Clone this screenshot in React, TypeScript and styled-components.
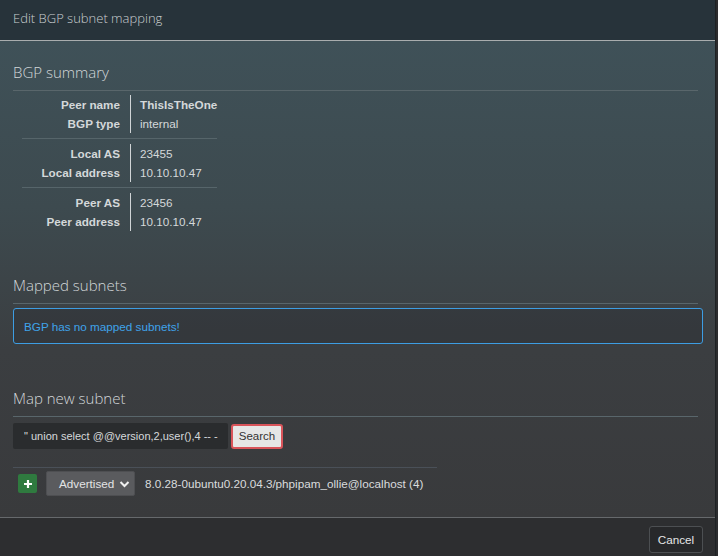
import React from 'react';
import styled, { createGlobalStyle } from 'styled-components';

const Global = createGlobalStyle`
  html, body { margin: 0; padding: 0; background: #2b2c2e; }
  body { font-family: "Liberation Sans", Arial, sans-serif; }
`;

const Modal = styled.div`
  width: 716px;
  height: 556px;
  display: flex;
  flex-direction: column;
  border-right: 1px solid #1e2224;
  box-sizing: border-box;
  overflow: hidden;
`;

const Header = styled.div`
  height: 41px;
  flex: none;
  box-sizing: border-box;
  background: #27333a;
  border-bottom: 1px solid #a9adae;
  display: flex;
  align-items: center;
  padding: 0 13px 5px 13px;
  color: #c9cfd1;
  font-family: "Open Sans", sans-serif;
  font-weight: 300;
  font-size: 13px;
`;

const Body = styled.div`
  flex: 1;
  background: linear-gradient(180deg, #3f5158 0%, #3d4a4f 35%, #3b3e41 65%, #393a3c 100%);
  padding: 21px 13px 0 13px;
  display: flex;
  flex-direction: column;
  align-items: flex-start;
`;

const SectionTitle = styled.h4<{ $top?: number }>`
  margin: ${p => p.$top ?? 0}px 0 0 0;
  font-family: "Open Sans", sans-serif;
  font-weight: 300;
  font-size: 15px;
  color: #d2d7d9;
  padding-bottom: 8px;
  border-bottom: 1px solid #59666b;
  width: 685px;
`;

const SummaryTable = styled.table`
  border-collapse: collapse;
  margin: 4px 0 0 9px;
  font-size: 11.7px;
  color: #d4d8da;
`;

const Label = styled.th`
  text-align: right;
  font-weight: bold;
  padding: 0 10px 0 0;
  width: 98px;
  height: 19px;
  line-height: 19px;
  border-right: 1px solid #d0d4d6;
  white-space: nowrap;
`;

const Value = styled.td<{ $bold?: boolean }>`
  padding: 0 0 0 9px;
  width: 66px;
  height: 19px;
  line-height: 19px;
  font-weight: ${p => (p.$bold ? 'bold' : 'normal')};
  white-space: nowrap;
`;

const DividerCell = styled.td`
  height: 5px;
  padding: 0;
  border-bottom: 1px solid #56656a;
`;

const GapCell = styled.td`
  height: 5px;
  padding: 0;
`;

const Alert = styled.div`
  margin-top: 4px;
  width: 690px;
  height: 36px;
  box-sizing: border-box;
  border: 1px solid #3d9de3;
  border-radius: 3px;
  background: rgba(40, 44, 48, 0.35);
  color: #3fa3ea;
  font-size: 11.7px;
  display: flex;
  align-items: center;
  padding-left: 10px;
`;

const SearchRow = styled.div`
  display: flex;
  align-items: center;
  gap: 3px;
  margin-top: 6px;
`;

const Input = styled.input`
  width: 215px;
  height: 26px;
  box-sizing: border-box;
  background: #2a2c2e;
  border: none;
  border-radius: 2px;
  color: #d6d9db;
  font-family: "Liberation Sans", Arial, sans-serif;
  font-size: 11px;
  padding: 0 2px 0 11px;
  outline: none;
`;

const SearchButton = styled.button`
  height: 25px;
  width: 52px;
  box-sizing: border-box;
  background: #e6e6e6;
  border: 2px solid #d9545a;
  border-radius: 3px;
  color: #333;
  font-family: "Liberation Sans", Arial, sans-serif;
  font-size: 11.5px;
  padding: 0;
`;

const ResultRule = styled.div`
  width: 424px;
  margin-top: 18px;
  border-top: 1px solid #4a5058;
`;

const ResultRow = styled.div`
  display: flex;
  align-items: center;
  margin-top: 3px;
  padding-left: 5px;
`;

const AddButton = styled.button`
  width: 19px;
  height: 19px;
  background: #2f7a3f;
  border: none;
  border-radius: 2px;
  display: flex;
  align-items: center;
  justify-content: center;
  padding: 0;
  margin-right: 9px;
`;

const Select = styled.div`
  width: 89px;
  height: 25px;
  box-sizing: border-box;
  background: #5a5b5e;
  border: 1px solid #4e4f52;
  border-radius: 2px;
  display: flex;
  align-items: center;
  justify-content: space-between;
  padding: 0 4px 0 12px;
  color: #e3e4e5;
  font-size: 11.7px;
  margin-right: 10px;
`;

const ResultText = styled.span`
  color: #d9dcde;
  font-size: 11.7px;
`;

const Footer = styled.div`
  height: 38px;
  flex: none;
  background: #2d2e30;
  border-top: 1px solid #66696c;
  display: flex;
  justify-content: flex-end;
  align-items: center;
  padding: 0 12px;
`;

const CancelButton = styled.button`
  width: 54px;
  height: 27px;
  background: #27282a;
  border: 1px solid #4c4f52;
  border-radius: 3px;
  color: #e5e6e7;
  font-family: "Liberation Sans", Arial, sans-serif;
  font-size: 11.7px;
  padding: 0;
  margin-top: 4px;
`;

const groups = [
  [['Peer name', 'ThisIsTheOne', true], ['BGP type', 'internal', false]],
  [['Local AS', '23455', false], ['Local address', '10.10.10.47', false]],
  [['Peer AS', '23456', false], ['Peer address', '10.10.10.47', false]],
] as [string, string, boolean][][];

export default function App() {
  return (
    <>
      <Global />
      <Modal>
        <Header>Edit BGP subnet mapping</Header>
        <Body>
          <SectionTitle>BGP summary</SectionTitle>
          <SummaryTable>
            <tbody>
              {groups.map((g, gi) => (
                <React.Fragment key={gi}>
                  {gi > 0 && (
                    <>
                      <tr>
                        <DividerCell colSpan={2} />
                      </tr>
                      <tr>
                        <GapCell colSpan={2} />
                      </tr>
                    </>
                  )}
                  {g.map(([l, v, b]) => (
                    <tr key={l}>
                      <Label>{l}</Label>
                      <Value $bold={b}>{v}</Value>
                    </tr>
                  ))}
                </React.Fragment>
              ))}
            </tbody>
          </SummaryTable>

          <SectionTitle $top={44}>Mapped subnets</SectionTitle>
          <Alert>BGP has no mapped subnets!</Alert>

          <SectionTitle $top={44}>Map new subnet</SectionTitle>
          <SearchRow>
            <Input defaultValue={'" union select @@version,2,user(),4 -- -'} />
            <SearchButton>Search</SearchButton>
          </SearchRow>
          <ResultRule />
          <ResultRow>
            <AddButton>
              <svg width="10" height="10" viewBox="0 0 10 10">
                <path d="M5 1v8M1 5h8" stroke="#fff" strokeWidth="2.2" />
              </svg>
            </AddButton>
            <Select>
              <span>Advertised</span>
              <svg width="11" height="8" viewBox="0 0 11 8">
                <path d="M1.5 2l4 4 4-4" stroke="#f0f0f0" strokeWidth="2" fill="none" />
              </svg>
            </Select>
            <ResultText>8.0.28-0ubuntu0.20.04.3/phpipam_ollie@localhost (4)</ResultText>
          </ResultRow>
        </Body>
        <Footer>
          <CancelButton>Cancel</CancelButton>
        </Footer>
      </Modal>
    </>
  );
}
